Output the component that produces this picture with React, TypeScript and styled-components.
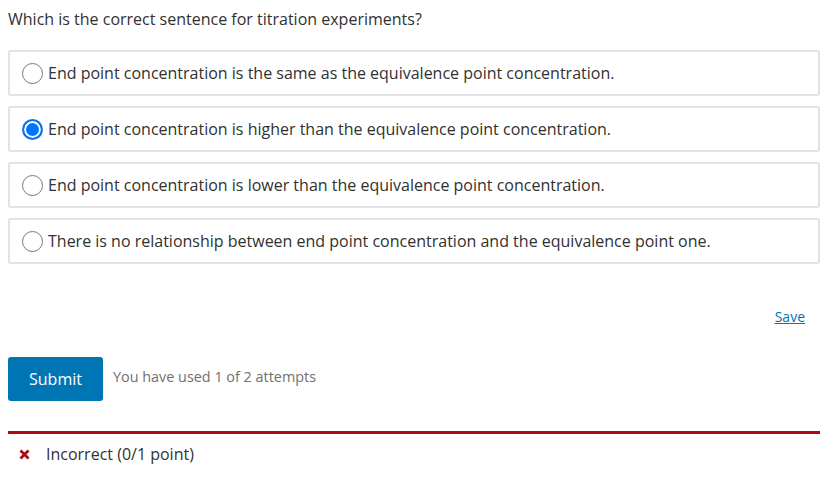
import React from "react";
import styled, { createGlobalStyle } from "styled-components";

const GlobalStyle = createGlobalStyle`
  body {
    margin: 0;
    background: #fff;
    font-family: "Open Sans", "Liberation Sans", sans-serif;
    color: #313131;
  }
`;

const Page = styled.div`
  width: 812px;
  padding: 0 8px;
`;

const Question = styled.p`
  margin: 0;
  padding-top: 8px;
  font-size: 16px;
  line-height: 22px;
  color: #313131;
`;

const OptionList = styled.div`
  display: flex;
  flex-direction: column;
  gap: 10px;
  margin-top: 20px;
`;

const Option = styled.label`
  display: flex;
  align-items: center;
  gap: 5px;
  height: 42px;
  padding: 0 12px;
  border: 2px solid #e2e2e2;
  border-radius: 3px;
  font-size: 16px;
  color: #313131;
  cursor: pointer;
`;

const Radio = styled.input.attrs({ type: "radio" })`
  appearance: none;
  margin: 0;
  width: 21px;
  height: 21px;
  border-radius: 50%;
  border: 1px solid #767676;
  background: #fff;
  flex-shrink: 0;

  &:checked {
    border: 2px solid #0075ff;
    background: #0075ff;
    box-shadow: inset 0 0 0 2px #fff;
  }
`;

const SaveRow = styled.div`
  display: flex;
  justify-content: flex-end;
  padding-right: 15px;
  margin-top: 43px;
`;

const SaveLink = styled.a`
  font-size: 14px;
  line-height: 20px;
  color: #0075b4;
  text-decoration: underline;
`;

const ActionRow = styled.div`
  display: flex;
  align-items: flex-start;
  gap: 10px;
  margin-top: 30px;
`;

const SubmitButton = styled.button`
  width: 95px;
  height: 44px;
  border: none;
  border-radius: 3px;
  background: #0075b4;
  color: #fff;
  font-family: "Open Sans", "Liberation Sans", sans-serif;
  font-size: 16px;
  cursor: pointer;
`;

const Attempts = styled.span`
  font-size: 14.4px;
  line-height: 20px;
  margin-top: 10px;
  color: #707070;
`;

const Feedback = styled.div`
  display: flex;
  align-items: center;
  gap: 16px;
  margin-top: 30px;
  border-top: 3px solid #b20610;
  padding: 9px 0 0 11px;
  font-size: 16px;
  line-height: 22px;
  color: #313131;
`;

const options = [
  "End point concentration is the same as the equivalence point concentration.",
  "End point concentration is higher than the equivalence point concentration.",
  "End point concentration is lower than the equivalence point concentration.",
  "There is no relationship between end point concentration and the equivalence point one.",
];

const CrossIcon = () => (
  <svg width="11" height="11" viewBox="0 0 11 11">
    <path d="M1.5 1.5 L9.5 9.5 M9.5 1.5 L1.5 9.5" stroke="#b20610" strokeWidth="2.8" strokeLinecap="butt" />
  </svg>
);

export default function App() {
  const [selected, setSelected] = React.useState(1);
  return (
    <Page>
      <GlobalStyle />
      <Question>Which is the correct sentence for titration experiments?</Question>
      <OptionList>
        {options.map((text, i) => (
          <Option key={i}>
            <Radio name="q1" checked={selected === i} onChange={() => setSelected(i)} />
            {text}
          </Option>
        ))}
      </OptionList>
      <SaveRow>
        <SaveLink href="#">Save</SaveLink>
      </SaveRow>
      <ActionRow>
        <SubmitButton>Submit</SubmitButton>
        <Attempts>You have used 1 of 2 attempts</Attempts>
      </ActionRow>
      <Feedback>
        <CrossIcon />
        Incorrect (0/1 point)
      </Feedback>
    </Page>
  );
}
